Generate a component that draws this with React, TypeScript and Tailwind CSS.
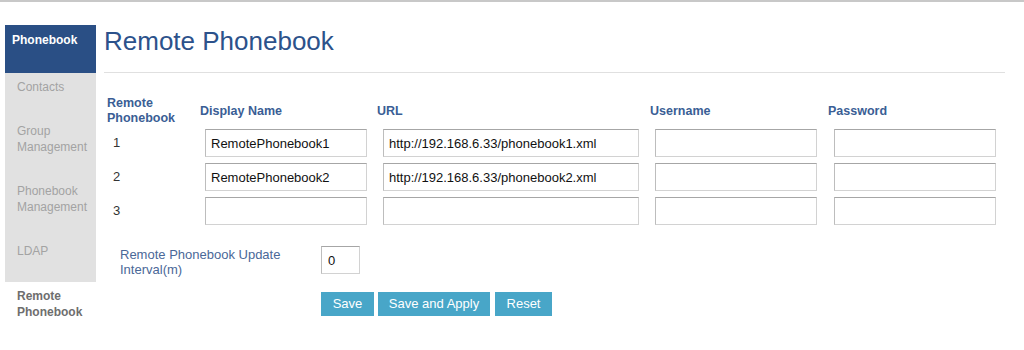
import React from "react";

const inputCls =
  "h-[28px] border border-[#d2d2d2] border-t-[#a6a6a6] border-l-[#bdbdbd] bg-white px-[5px] text-[13px] text-[#111] outline-none";

const rows = [
  { n: "1", name: "RemotePhonebook1", url: "http://192.168.6.33/phonebook1.xml" },
  { n: "2", name: "RemotePhonebook2", url: "http://192.168.6.33/phonebook2.xml" },
  { n: "3", name: "", url: "" },
];

export default function App() {
  return (
    <div
      className="w-[1024px] h-[350px] bg-white overflow-hidden"
      style={{ fontFamily: '"Liberation Sans", Arial, sans-serif' }}
    >
      <div className="h-[2px] bg-[#c8c8c8]" />
      <div className="flex pt-[23px]">
        {/* Sidebar */}
        <div className="ml-[5px] w-[91px] shrink-0 text-[12px] leading-[16px]">
          <div className="h-[48px] bg-[#2a4f85] px-[7px] pt-[7px] font-bold text-white">
            Phonebook
          </div>
          <div className="bg-[#e1e1e1] text-[#a3a3a3]">
            <div className="px-[12px] pt-[6px] pb-[22px]">Contacts</div>
            <div className="px-[12px] pt-[6px] pb-[22px]">
              Group
              <br />
              Management
            </div>
            <div className="px-[12px] pt-[6px] pb-[22px]">
              Phonebook
              <br />
              Management
            </div>
            <div className="px-[12px] pt-[6px] pb-[23px]">LDAP</div>
          </div>
          <div className="px-[12px] pt-[6px] font-bold text-[#6e6e6e]">
            Remote
            <br />
            Phonebook
          </div>
        </div>

        {/* Main */}
        <div className="ml-[8px] w-[901px]">
          <div className="text-[26px] leading-[30px] text-[#2c528b] pt-[1px]">Remote Phonebook</div>
          <div className="mt-[16px] h-px bg-[#e0e0e0]" />

          <div className="ml-[3px] mt-[23px] grid grid-cols-[93px_177px_273px_178px_178px] text-[12.5px] leading-[15px] font-bold text-[#3a5e95]">
            <div>
              Remote
              <br />
              Phonebook
            </div>
            <div className="self-center">Display Name</div>
            <div className="self-center">URL</div>
            <div className="self-center">Username</div>
            <div className="self-center">Password</div>
          </div>

          <div className="ml-[3px] mt-[3px] flex flex-col gap-[6px]">
            {rows.map((r) => (
              <div key={r.n} className="grid grid-cols-[93px_177px_273px_178px_178px] items-center">
                <div className="pl-[6px] text-[13px] text-[#333]">{r.n}</div>
                <div className="pl-[5px]">
                  <input readOnly value={r.name} className={inputCls + " w-[162px]"} />
                </div>
                <div className="pl-[6px]">
                  <input readOnly value={r.url} className={inputCls + " w-[256px]"} />
                </div>
                <div className="pl-[5px]">
                  <input readOnly value="" className={inputCls + " w-[162px]"} />
                </div>
                <div className="pl-[6px]">
                  <input readOnly value="" className={inputCls + " w-[162px]"} />
                </div>
              </div>
            ))}
          </div>

          <div className="mt-[21px] flex items-start">
            <div className="ml-[16px] w-[201px] pt-[1px] text-[13px] leading-[15px] text-[#4a6898]">
              Remote Phonebook Update
              <br />
              Interval(m)
            </div>
            <input readOnly value="0" className={inputCls + " w-[39px] h-[27px] px-[6px]"} />
          </div>

          <div className="mt-[15px] ml-[217px] flex gap-[4px]">
            <button className="h-[24px] w-[53px] bg-[#48a6c8] text-[13px] text-white">Save</button>
            <button className="h-[24px] w-[112px] bg-[#48a6c8] text-[13px] text-white">Save and Apply</button>
            <button className="h-[24px] w-[57px] bg-[#48a6c8] text-[13px] text-white ml-[1px]">Reset</button>
          </div>
        </div>
      </div>
    </div>
  );
}
